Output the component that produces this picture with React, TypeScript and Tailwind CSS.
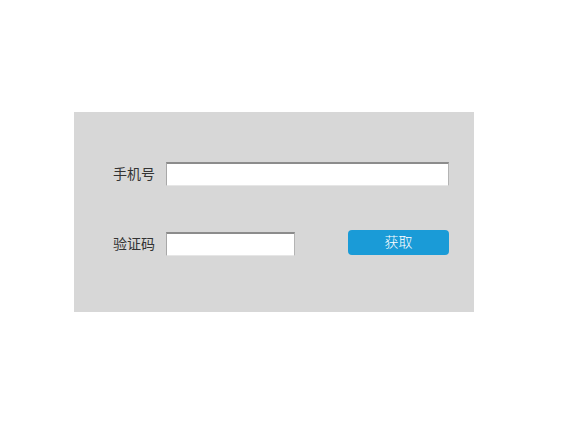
export default function App() {
  return (
    <div className="w-[580px] h-[440px] bg-white pt-[112px] pl-[74px] font-['Liberation_Sans','Noto_Sans_CJK_SC',sans-serif]">
      <div className="w-[400px] h-[200px] bg-[#d7d7d7] pt-[50px] pl-[39px]">
        <div className="flex items-center h-[24px]">
          <span className="w-[53px] pt-[1px] text-[14px] text-[#333]">手机号</span>
          <input className="w-[283px] h-[24px] bg-white border-t-2 border-t-[#8c8c8c] border-l border-l-[#a8a8a8] border-r border-r-[#b4b4b4] border-b border-b-[#e6e6e6] outline-none" />
        </div>
        <div className="flex items-center h-[24px] mt-[46px]">
          <span className="w-[53px] pt-[1px] text-[14px] text-[#333]">验证码</span>
          <input className="w-[129px] h-[24px] bg-white border-t-2 border-t-[#8c8c8c] border-l border-l-[#a8a8a8] border-r border-r-[#b4b4b4] border-b border-b-[#e6e6e6] outline-none" />
          <button className="ml-[53px] -mt-[3px] w-[101px] h-[25px] rounded-[4px] bg-[#1a9bd7] text-white text-[14px] font-light leading-[25px]">
            获取
          </button>
        </div>
      </div>
    </div>
  );
}
